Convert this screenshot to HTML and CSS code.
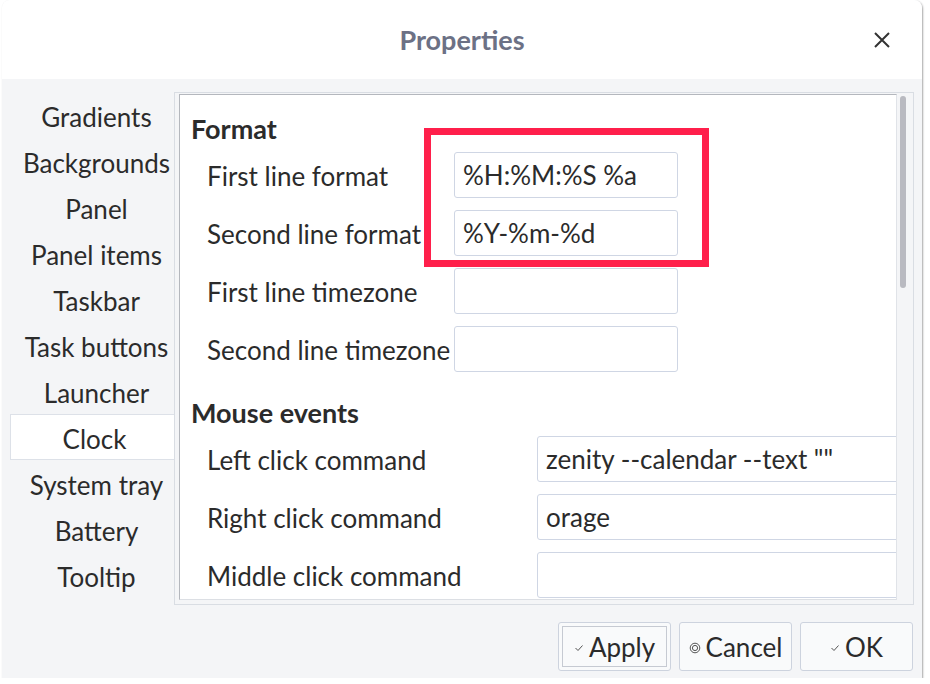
FILE: index.html
```html
<!DOCTYPE html>
<html lang="en">
<head>
<meta charset="utf-8">
<title>Properties</title>
<link rel="stylesheet" href="styles.css">
</head>
<body>
<div class="window">
  <header class="titlebar">
    <span class="spacer"></span>
    <h1 class="title">Properties</h1>
    <button class="close" aria-label="Close">
      <svg viewBox="0 0 20 20" width="20" height="20"><path d="M3 3 L17 17 M17 3 L3 17" stroke="#333" stroke-width="2" fill="none"/></svg>
    </button>
  </header>
  <div class="body">
    <div class="main">
      <ul class="sidebar">
        <li>Gradients</li>
        <li>Backgrounds</li>
        <li>Panel</li>
        <li>Panel items</li>
        <li>Taskbar</li>
        <li>Task buttons</li>
        <li>Launcher</li>
        <li class="active">Clock</li>
        <li>System tray</li>
        <li>Battery</li>
        <li>Tooltip</li>
      </ul>
      <div class="frame">
        <div class="scroll">
          <div class="content">
            <section class="group group-format">
              <h2>Format</h2>
              <div class="row"><label>First line format</label><div class="input">%H:%M:%S %a</div></div>
              <div class="row"><label>Second line format</label><div class="input">%Y-%m-%d</div></div>
              <div class="row"><label>First line timezone</label><div class="input"></div></div>
              <div class="row"><label>Second line timezone</label><div class="input"></div></div>
            </section>
            <section class="group group-mouse">
              <h2>Mouse events</h2>
              <div class="row"><label>Left click command</label><div class="input">zenity --calendar --text ""</div></div>
              <div class="row"><label>Right click command</label><div class="input">orage</div></div>
              <div class="row"><label>Middle click command</label><div class="input"></div></div>
            </section>
          </div>
          <div class="highlight"></div>
        </div>
        <div class="scrollbar"><div class="thumb"></div></div>
      </div>
    </div>
    <div class="buttons">
      <button class="btn focused">
        <svg class="ico" viewBox="0 0 10 8" width="10" height="8"><path d="M1.5 4 L4 6.5 L8.5 1.5" stroke="#555" stroke-width="1" fill="none"/></svg>
        <span>Apply</span>
      </button>
      <button class="btn">
        <svg class="ico" viewBox="0 0 12 12" width="12" height="12"><circle cx="6" cy="6" r="4.8" stroke="#555" stroke-width="1" fill="none"/><circle cx="6" cy="6" r="2.6" stroke="#555" stroke-width="1" fill="none"/></svg>
        <span>Cancel</span>
      </button>
      <button class="btn">
        <svg class="ico" viewBox="0 0 10 8" width="10" height="8"><path d="M1.5 4 L4 6.5 L8.5 1.5" stroke="#555" stroke-width="1" fill="none"/></svg>
        <span>OK</span>
      </button>
    </div>
  </div>
</div>
</body>
</html>
```
FILE: styles.css
```css
* { box-sizing: border-box; }

body {
  margin: 0;
  background: #ffffff;
  font-family: Lato, "Noto Sans", sans-serif;
  color: #2b2b2b;
}

.window {
  margin-left: 2px;
  width: 920px;
  height: 678px;
  border-radius: 8px 8px 0 0;
  box-shadow: 1px 1px 2px rgba(0, 0, 0, 0.35);
  overflow: hidden;
  display: flex;
  flex-direction: column;
  background: #f4f5f7;
}

.titlebar {
  height: 79px;
  flex: none;
  background: #ffffff;
  display: grid;
  grid-template-columns: 1fr auto 1fr;
  align-items: center;
}

.title {
  margin: 0;
  font-size: 27px;
  font-weight: 700;
  color: #6c7185;
}

.close {
  justify-self: end;
  margin-right: 30px;
  width: 20px;
  height: 20px;
  padding: 0;
  border: 0;
  background: none;
  display: block;
}

.close svg { display: block; }

.body {
  flex: 1;
  padding: 13px 8px 7px 8px;
  display: flex;
  flex-direction: column;
  gap: 17px;
}

.main {
  display: flex;
  height: 513px;
}

.sidebar {
  width: 164px;
  margin: 0;
  padding: 0;
  list-style: none;
  flex: none;
}

.sidebar li {
  height: 46px;
  line-height: 48px;
  padding-left: 8px;
  text-align: center;
  font-size: 26px;
  color: #2b2b2b;
  border: 1px solid transparent;
  border-right: 0;
  white-space: nowrap;
  overflow: visible;
}

.sidebar li.active {
  background: #ffffff;
  border-color: #dde1e8;
  padding-left: 4px;
}

.frame {
  flex: 1;
  min-width: 0;
  border: 1px solid #d9dde3;
  padding: 1px 0 4px 4px;
  display: flex;
}

.scroll {
  flex: 1;
  min-width: 0;
  position: relative;
  overflow: hidden;
  background: #ffffff;
  border: 1px solid;
  border-color: #b4b7bd #e0e3e8 #dcdfe4 #b4b7bd;
}

.content {
  padding: 19px 0 0 11px;
  display: flex;
  flex-direction: column;
}

.group {
  display: flex;
  flex-direction: column;
  gap: 12px;
}

.group h2 {
  margin: 0 0 -4px;
  font-size: 27px;
  line-height: 30px;
  font-weight: 700;
  color: #2b2b2b;
}

.group-mouse { margin-top: 26px; }

.row {
  display: grid;
  align-items: center;
  height: 46px;
}

.group-format .row { grid-template-columns: 263px 224px; }
.group-mouse .row { grid-template-columns: 346px 420px; }

.row label {
  padding-left: 16px;
  padding-top: 2px;
  font-size: 26px;
  white-space: nowrap;
}

.input {
  height: 46px;
  border: 1px solid #cfd6e4;
  border-radius: 3px;
  background: #ffffff;
  padding: 0 8px;
  font-size: 26px;
  line-height: 45px;
  white-space: nowrap;
  overflow: hidden;
}

.highlight {
  position: absolute;
  left: 244px;
  top: 33px;
  width: 285px;
  height: 139px;
  border: 7px solid #ff1f4b;
}

.scrollbar {
  width: 16px;
  flex: none;
}

.thumb {
  margin: 2px 0 0 3px;
  width: 6px;
  height: 192px;
  border-radius: 3px;
  background: #b9bac1;
}

.buttons {
  display: flex;
  justify-content: flex-end;
  gap: 8px;
  height: 49px;
  padding-right: 1px;
}

.btn {
  width: 113px;
  height: 49px;
  border: 1px solid #cdd3de;
  border-radius: 3px;
  background: #f9fafb;
  font-family: inherit;
  font-size: 26px;
  color: #2b2b2b;
  display: flex;
  align-items: center;
  justify-content: center;
  gap: 5px;
  padding: 0;
}

.btn.focused {
  outline: 1px solid #c6cad2;
  outline-offset: -5px;
}

.ico { flex: none; margin-top: 2px; }
```
